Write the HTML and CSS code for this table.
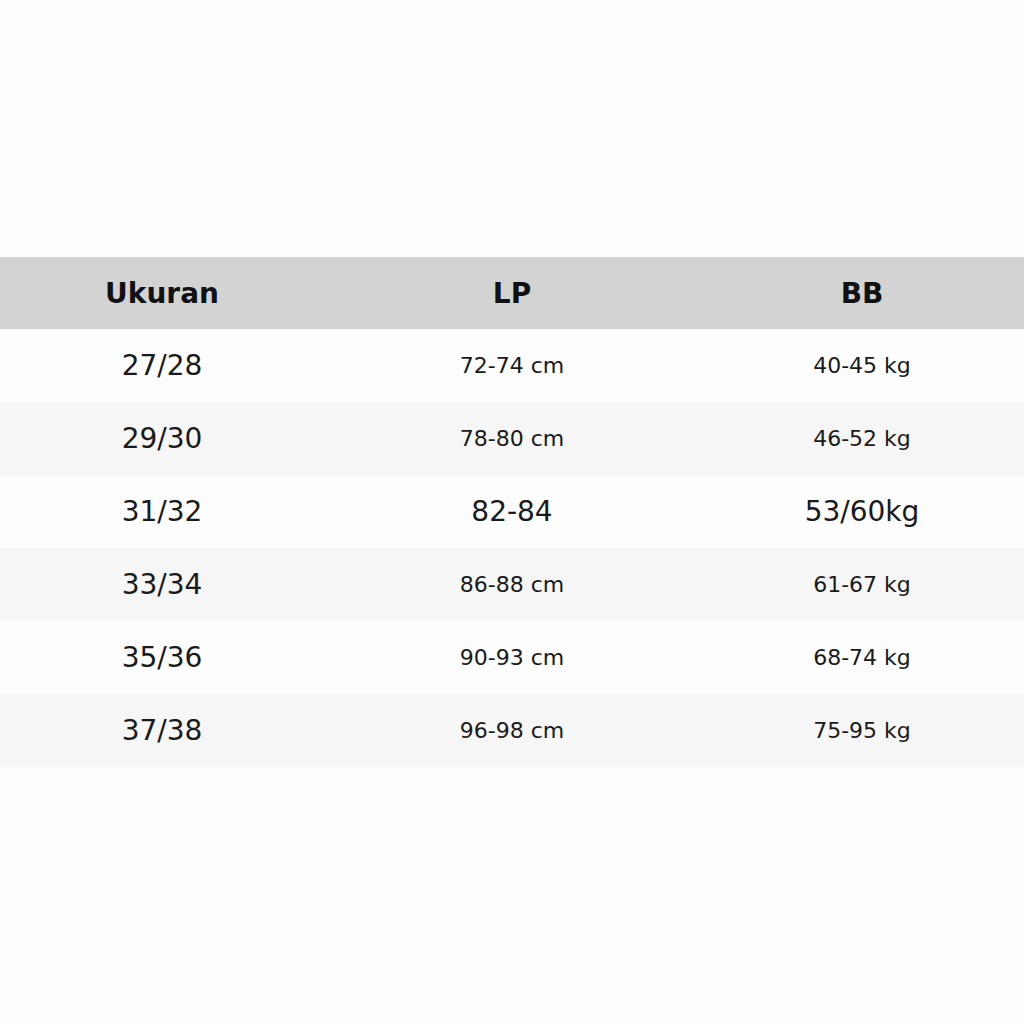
FILE: index.html
```html
<!DOCTYPE html>
<html lang="id">
<head>
<meta charset="utf-8">
<title>Ukuran</title>
<link rel="stylesheet" href="styles.css">
</head>
<body>
<div class="page">
  <div class="table">
    <div class="row head">
      <div class="cell">Ukuran</div>
      <div class="cell">LP</div>
      <div class="cell">BB</div>
    </div>
    <div class="row">
      <div class="cell big">27/28</div>
      <div class="cell">72-74 cm</div>
      <div class="cell">40-45 kg</div>
    </div>
    <div class="row alt">
      <div class="cell big">29/30</div>
      <div class="cell">78-80 cm</div>
      <div class="cell">46-52 kg</div>
    </div>
    <div class="row">
      <div class="cell big">31/32</div>
      <div class="cell big">82-84</div>
      <div class="cell big">53/60kg</div>
    </div>
    <div class="row alt">
      <div class="cell big">33/34</div>
      <div class="cell">86-88 cm</div>
      <div class="cell">61-67 kg</div>
    </div>
    <div class="row">
      <div class="cell big">35/36</div>
      <div class="cell">90-93 cm</div>
      <div class="cell">68-74 kg</div>
    </div>
    <div class="row alt">
      <div class="cell big">37/38</div>
      <div class="cell">96-98 cm</div>
      <div class="cell">75-95 kg</div>
    </div>
  </div>
</div>
</body>
</html>
```
FILE: styles.css
```css
html, body {
  margin: 0;
  padding: 0;
  background: #fdfdfd;
}
body {
  font-family: "DejaVu Sans", sans-serif;
  color: #1a1a1a;
}
.page {
  width: 1024px;
  height: 1024px;
  padding-top: 257px;
  box-sizing: border-box;
}
.table {
  display: flex;
  flex-direction: column;
}
.row {
  display: grid;
  grid-template-columns: 324px 376px 324px;
  height: 73px;
  background: #fdfdfd;
}
.row.alt {
  background: #f6f6f6;
}
.row.head {
  height: 72px;
  background: #d3d3d3;
  font-weight: bold;
  color: #111;
}
.cell {
  display: flex;
  align-items: center;
  justify-content: center;
  font-size: 22px;
}
.row.head .cell {
  font-size: 28px;
}
.cell.big {
  font-size: 28px;
}
```
